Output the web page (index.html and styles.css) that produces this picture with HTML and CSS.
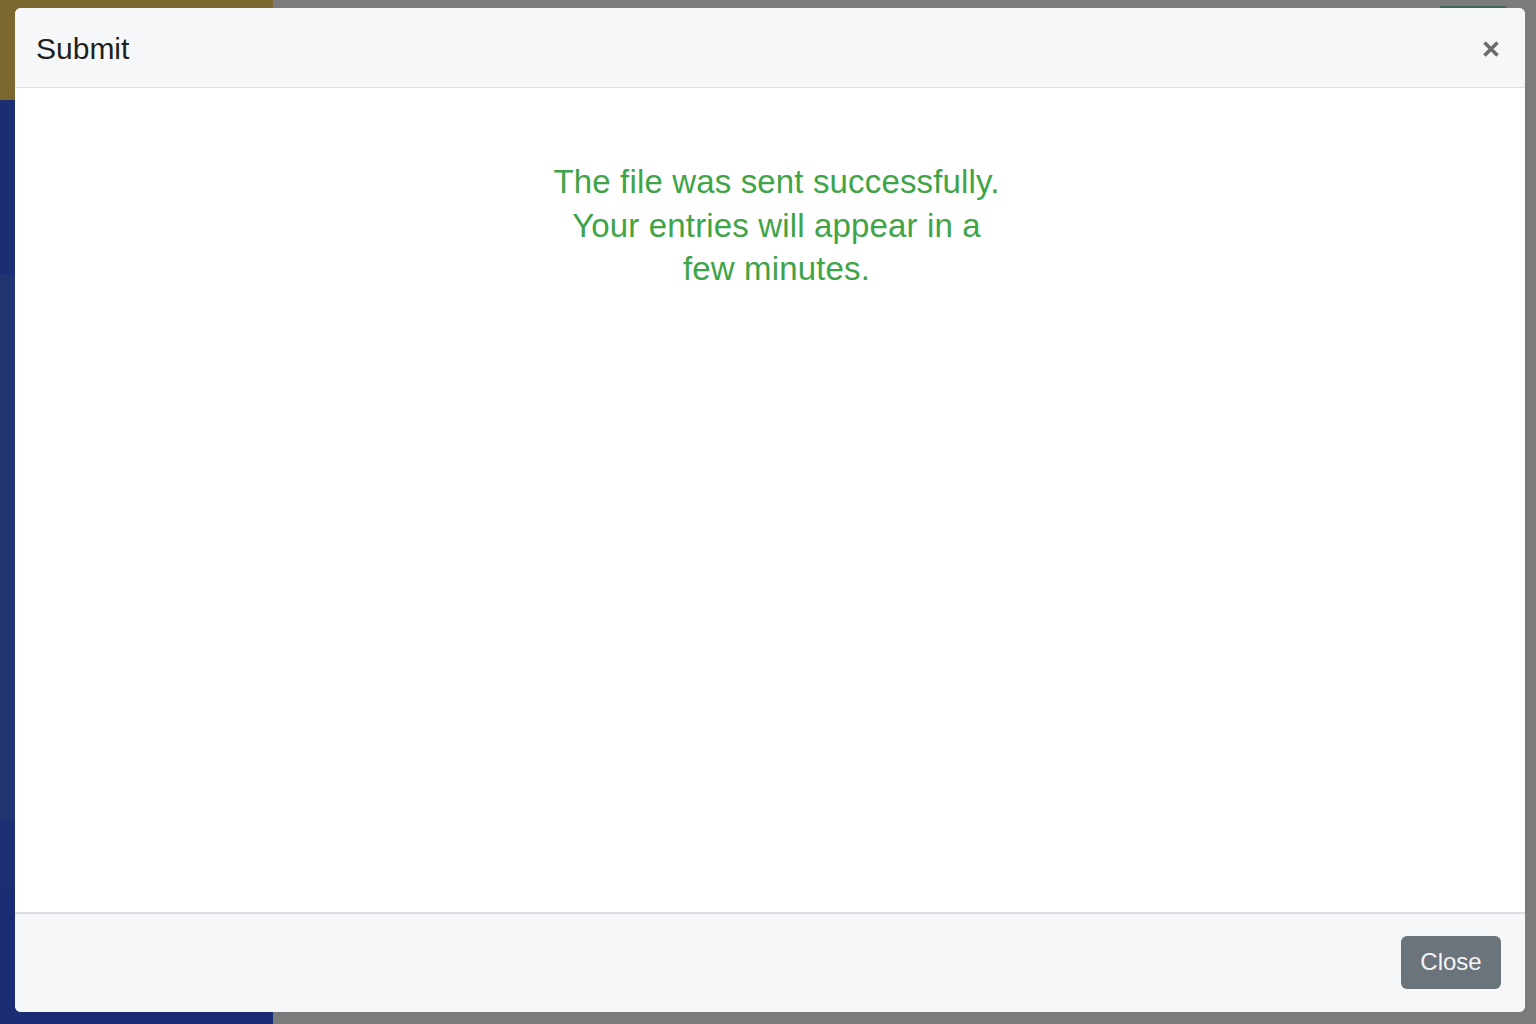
FILE: index.html
```html
<!DOCTYPE html>
<html lang="en">
<head>
<meta charset="utf-8">
<title>Submit</title>
<link rel="stylesheet" href="styles.css">
</head>
<body>
<div class="page">
  <aside class="sidebar">
    <div class="brand"></div>
    <div class="nav">
      <div class="nav-top"></div>
      <div class="nav-mid"></div>
      <div class="nav-low"></div>
      <div class="nav-rest"></div>
    </div>
  </aside>
  <main class="main">
    <div class="topbar"><span class="top-btn"></span></div>
  </main>
</div>

<div class="modal">
  <div class="modal-header">
    <h5 class="modal-title">Submit</h5>
    <button class="close" aria-label="Close">
      <svg width="18" height="18" viewBox="0 0 18 18"><path d="M2.5 2.5 L15.5 15.5 M15.5 2.5 L2.5 15.5" stroke="#6c6c6c" stroke-width="3.6" stroke-linecap="butt"/></svg>
    </button>
  </div>
  <div class="modal-body">
    <p class="success">The file was sent successfully.<br>Your entries will appear in a<br>few minutes.</p>
  </div>
  <div class="modal-footer">
    <button class="btn">Close</button>
  </div>
</div>
</body>
</html>
```

FILE: styles.css
```css
html, body {
  margin: 0;
  padding: 0;
  height: 100%;
}
body {
  font-family: "Liberation Sans", Arial, Helvetica, sans-serif;
  background: #7b7b7b;
  overflow: hidden;
}
.page {
  display: flex;
  height: 1024px;
}
.sidebar {
  width: 273px;
  display: flex;
  flex-direction: column;
}
.brand {
  height: 100px;
  background: #7c6731;
}
.nav {
  flex: 1;
  display: flex;
  flex-direction: column;
  background: #1b2e74;
}
.nav-top { height: 175px; background: #1b2e74; }
.nav-mid { height: 545px; background: #213573; }
.nav-low { height: 70px; background: #1c2f72; }
.nav-rest { flex: 1; background: #1a2d74; }
.main {
  flex: 1;
  background: #7b7b7b;
}
.topbar {
  height: 8px;
  display: flex;
  justify-content: flex-end;
  align-items: flex-end;
  padding-right: 30px;
}
.top-btn {
  width: 66px;
  height: 2px;
  background: #3f6a58;
}

.modal {
  position: absolute;
  left: 15px;
  top: 8px;
  width: 1510px;
  height: 1004px;
  background: #fff;
  border-radius: 6px;
  display: flex;
  flex-direction: column;
  overflow: hidden;
}
.modal-header {
  height: 79px;
  background: #f6f7f8;
  border-bottom: 1px solid #dcdee0;
  display: flex;
  align-items: center;
  justify-content: space-between;
  padding: 0 25px 0 21px;
}
.modal-title {
  margin: 0;
  font-size: 30px;
  font-weight: 400;
  color: #1d1f21;
  padding-top: 3px;
}
.close {
  background: none;
  border: 0;
  padding: 0;
  width: 18px;
  height: 18px;
  display: flex;
  margin-top: 2px;
}
.modal-body {
  flex: 1;
  display: flex;
  justify-content: center;
  padding-top: 72px;
  padding-left: 13px;
}
.success {
  margin: 0;
  text-align: center;
  color: #3fa447;
  font-size: 33px;
  line-height: 43.5px;
  letter-spacing: 0.15px;
}
.modal-footer {
  height: 100px;
  background: #f6f7f8;
  border-top: 2px solid #dcdee2;
  display: flex;
  align-items: center;
  justify-content: flex-end;
  padding-right: 24px;
  box-sizing: border-box;
}
.btn {
  width: 100px;
  height: 53px;
  background: #6b737b;
  color: #f4f5f6;
  border: 0;
  border-radius: 6px;
  font-family: "Liberation Sans", Arial, sans-serif;
  font-size: 24px;
  padding: 0;
  margin-bottom: 2px;
}
```
